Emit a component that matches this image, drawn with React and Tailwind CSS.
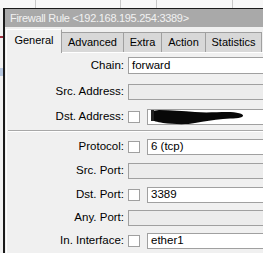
import React from "react";

function Field({ value, disabled, check, h = "h-[16px]" }) {
  return (
    <div className="flex items-center flex-1 min-w-0">
      {check && (
        <div className="w-[12px] h-[12px] bg-white border border-[#a0a0a0] mr-[7px] shrink-0" />
      )}
      <div
        className={
          "flex-1 " + h + " border border-[#a0a0a0] flex items-center pl-[3px] text-[11.5px] leading-none text-black " +
          (disabled ? "bg-[#ececec]" : "bg-white")
        }
      >
        {value}
      </div>
    </div>
  );
}

function Row({ label, children, mt = "" }) {
  return (
    <div className={"flex items-center " + mt}>
      <div className="w-[121px] text-right pr-[4px] text-[11.5px] leading-none text-black whitespace-nowrap">
        {label}
      </div>
      <div className="flex-1 flex items-center mr-[-40px]">{children}</div>
    </div>
  );
}

export default function App() {
  return (
    <div
      className="w-[263px] h-[253px] overflow-hidden flex flex-col bg-[#f5f5f5]"
      style={{ fontFamily: '"Liberation Sans", Arial, sans-serif' }}
    >
      {/* desktop strip behind window */}
      <div className="h-[8px] shrink-0 flex bg-[#f7f7f7]">
        <div className="w-[36px] border-r border-[#c8c8c8]" />
        <div className="w-[85px] border-r border-[#c8c8c8]" />
        <div className="w-[36px] border-r border-[#c8c8c8]" />
        <div className="w-[76px] border-r border-[#c8c8c8]" />
      </div>
      <div className="flex flex-1 min-h-0">
        <div className="w-[3px] shrink-0 flex flex-col bg-[#f2f2f2]">
          <div className="h-[28px]" />
          <div className="h-[2px] bg-[#a03040]" />
          <div className="h-[30px]" />
          <div className="h-[8px] bg-[#b8c8e0]" />
        </div>
        {/* window */}
        <div className="flex-1 flex flex-col border-l-2 border-t border-[#1a1a1a] bg-[#f0f0f0]">
          <div className="h-[18px] shrink-0 bg-[#a9a9a9] text-[#f2f2f2] text-[11px] tracking-[-0.3px] leading-none flex items-center pl-[5px] whitespace-nowrap">
            Firewall Rule &lt;192.168.195.254:3389&gt;
          </div>
          {/* tabs */}
          <div className="h-[25px] shrink-0 flex items-end pl-[1px] text-[11px] leading-none text-black">
            <div className="w-[56px] h-[24px] bg-[#f0f0f0] border-l border-t border-r border-[#a0a0a0] border-l-white border-t-white flex items-center justify-center pb-[2px] relative z-10 mb-[-1px]">
              General
            </div>
            <div className="w-[62px] h-[20px] bg-[#d8d8d8] border-t border-r border-[#a0a0a0] flex items-center justify-center">
              Advanced
            </div>
            <div className="w-[38px] h-[20px] bg-[#d8d8d8] border-t border-r border-[#a0a0a0] flex items-center justify-center">
              Extra
            </div>
            <div className="w-[44px] h-[20px] bg-[#d8d8d8] border-t border-r border-[#a0a0a0] flex items-center justify-center">
              Action
            </div>
            <div className="w-[56px] h-[20px] bg-[#d8d8d8] border-t border-r border-[#a0a0a0] flex items-center justify-center">
              Statistics
            </div>
          </div>
          {/* panel */}
          <div className="flex-1 ml-[1px] border-l border-t border-white bg-[#f0f0f0] pt-[4px] flex flex-col">
            <Row label="Chain:">
              <Field value="forward" h="h-[17px]" />
            </Row>
            <Row label="Src. Address:" mt="mt-[10px]">
              <Field disabled />
            </Row>
            <Row label="Dst. Address:" mt="mt-[9px]">
              <div className="flex items-center flex-1 relative">
                <Field check value="" />
                <svg
                  className="absolute left-[21px] top-[-1px]"
                  width="100"
                  height="18"
                  viewBox="0 0 100 18"
                >
                  <path
                    d="M3 3 L10 2 C22 2 34 3 46 4 C58 5 68 4 78 4 C88 4 95 6 94 8 C92 11 84 10 74 11 C64 12 56 13 46 15 C36 17 24 16 14 15 C8 14 4 13 3 11 Z"
                    fill="#080808"
                  />
                  <rect x="2" y="2" width="3" height="11" fill="#222" />
                </svg>
              </div>
            </Row>
            <div className="mt-[5px] ml-[1px] border-t border-[#a8a8a8] border-b border-b-white" />
            <Row label="Protocol:" mt="mt-[7px]">
              <Field check value="6 (tcp)" />
            </Row>
            <Row label="Src. Port:" mt="mt-[8px]">
              <Field disabled />
            </Row>
            <Row label="Dst. Port:" mt="mt-[8px]">
              <Field check value="3389" />
            </Row>
            <Row label="Any. Port:" mt="mt-[7px]">
              <Field disabled />
            </Row>
            <Row label="In. Interface:" mt="mt-[7px]">
              <Field check value="ether1" />
            </Row>
          </div>
        </div>
      </div>
    </div>
  );
}
